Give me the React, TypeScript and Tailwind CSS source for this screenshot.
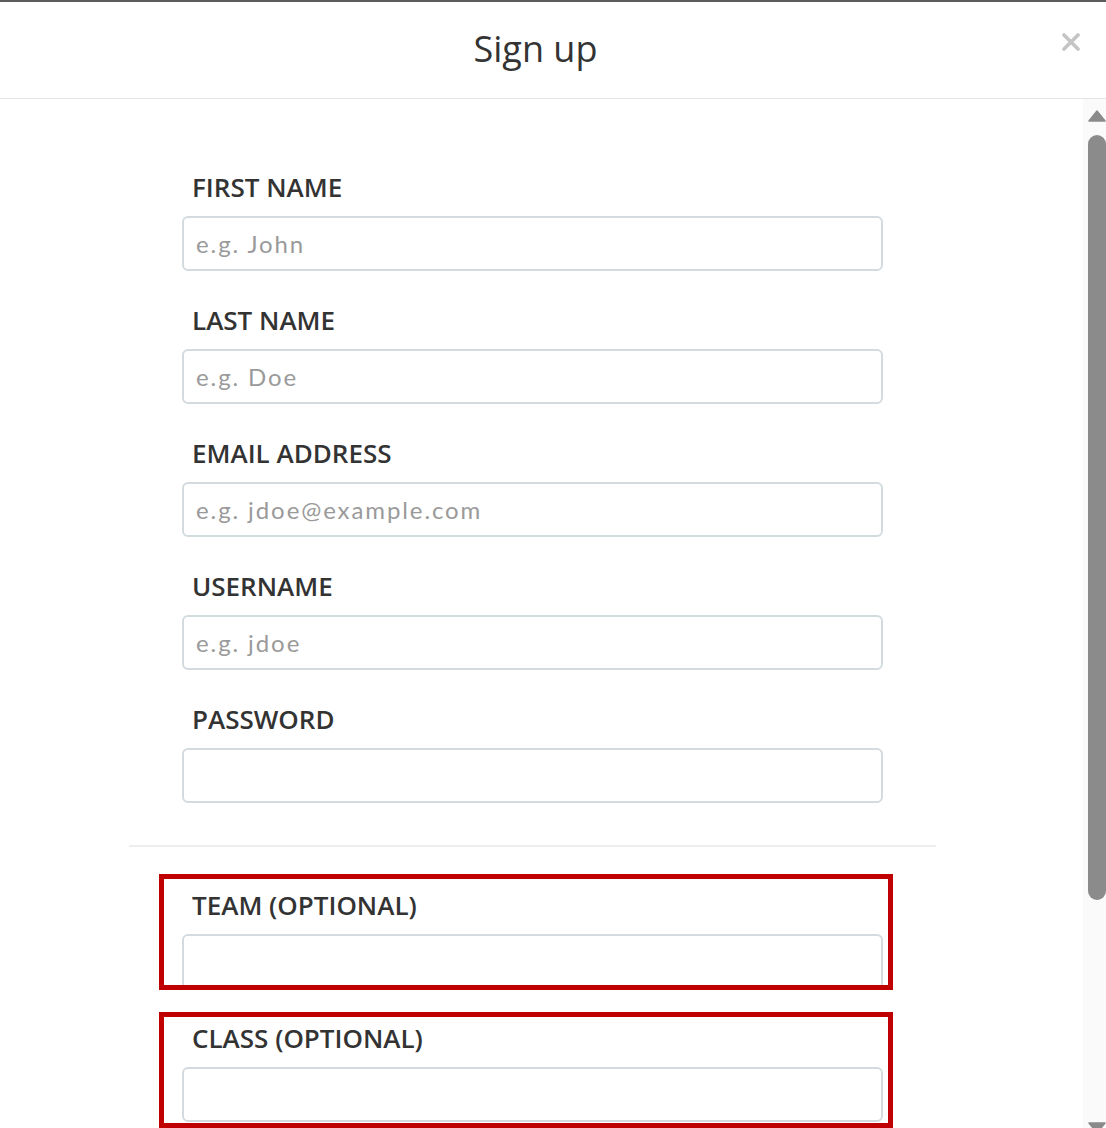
import React from "react";

// Field list for the sign up form
const fields = [
  { label: "FIRST NAME", placeholder: "e.g. John" },
  { label: "LAST NAME", placeholder: "e.g. Doe" },
  { label: "EMAIL ADDRESS", placeholder: "e.g. jdoe@example.com" },
  { label: "USERNAME", placeholder: "e.g. jdoe" },
  { label: "PASSWORD", placeholder: "" },
];

const labelCls =
  "block h-[32px] pl-[10px] text-[26px] leading-[30px] font-semibold text-[#333] font-['Open_Sans',sans-serif]";
const inputCls =
  "block mt-[12px] h-[55px] w-[701px] rounded-[6px] border-2 border-[#d3dbdf] bg-white pl-[12px] text-[24px] tracking-[1.9px] text-[#555] placeholder:text-[#9a9a9a] font-['Lato',sans-serif] outline-none";

const Field = ({ label, placeholder }: { label: string; placeholder: string }) => (
  <div>
    <label className={labelCls}>{label}</label>
    <input className={inputCls} placeholder={placeholder} type={label === "PASSWORD" ? "password" : "text"} />
  </div>
);

export default function App() {
  return (
    <div className="w-[1106px] h-[1128px] overflow-hidden bg-white border-t-2 border-[#5c5c5c] font-['Open_Sans',sans-serif]">
      {/* header */}
      <div className="relative h-[97px] border-b border-[#e5e5e5] flex items-center justify-center pr-[35px]">
        <h1 className="text-[36px] leading-none text-[#333] -mt-[2px]">Sign up</h1>
        <button className="absolute right-[26px] top-[31px] p-0">
          <svg width="18" height="18" viewBox="0 0 18 18">
            <path d="M2 2 L16 16 M16 2 L2 16" stroke="#c4c4c4" strokeWidth="3.6" strokeLinecap="round" />
          </svg>
        </button>
      </div>

      <div className="flex h-[1029px]">
        {/* body */}
        <div className="flex-1 pt-[73px]">
          <div className="ml-[129px] w-[807px]">
            <div className="px-[53px] flex flex-col gap-[34px]">
              {fields.map((f) => (
                <Field key={f.label} {...f} />
              ))}
            </div>
            <div className="mt-[42px] h-[2px] bg-[#eeeeee]" />
            <div className="mt-[27px] ml-[30px] w-[734px] h-[116px] border-[5px] border-[#c00000] overflow-hidden pt-[11px] pl-[18px]">
              <Field label="TEAM (OPTIONAL)" placeholder="" />
            </div>
            <div className="mt-[22px] ml-[30px] w-[734px] h-[116px] border-[5px] border-[#c00000] overflow-hidden pt-[6px] pl-[18px]">
              <Field label="CLASS (OPTIONAL)" placeholder="" />
            </div>
          </div>
        </div>

        {/* scrollbar */}
        <div className="w-[23px] bg-[#fafafa] flex flex-col items-end pt-[11px]">
          <svg width="18" height="12" viewBox="0 0 18 12">
            <path d="M9 1 L17 11 L1 11 Z" fill="#8a8a8a" strokeLinejoin="round" stroke="#8a8a8a" strokeWidth="1.5" />
          </svg>
          <div className="mt-[13px] w-[18px] h-[765px] rounded-full bg-[#8b8b8b]" />
          <div className="flex-1" />
          <svg width="18" height="12" viewBox="0 0 18 12" className="mb-[-6px]">
            <path d="M1 1 L17 1 L9 11 Z" fill="#8a8a8a" strokeLinejoin="round" stroke="#8a8a8a" strokeWidth="1.5" />
          </svg>
        </div>
      </div>
    </div>
  );
}
